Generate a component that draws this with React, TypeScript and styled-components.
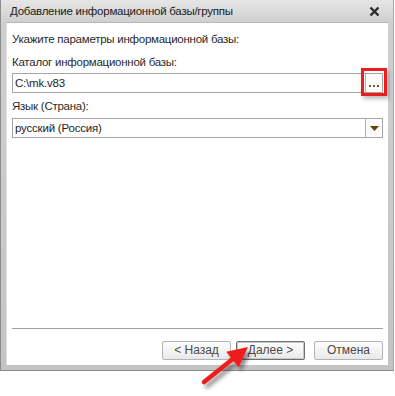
import React from "react";
import styled, { createGlobalStyle } from "styled-components";

const Global = createGlobalStyle`
  html, body { margin: 0; padding: 0; background: #ffffff; }
  body { width: 395px; height: 396px; overflow: hidden; position: relative; font-family: "Liberation Sans", Arial, sans-serif; }
`;

const Page = styled.div`
  position: relative;
  width: 395px;
  height: 396px;
`;

const Window = styled.div`
  width: 394px;
  height: 371px;
  box-sizing: border-box;
  display: flex;
  flex-direction: column;
  background: linear-gradient(to bottom, #e6e6e6 0px, #cfcfcf 22px, #c4c4c4 100%);
  border: 1px solid #8c8c8c;
  border-top: none;
  border-right-color: #a8a8a8;
  padding: 0 5px 5px 5px;
`;

const TitleBar = styled.div`
  height: 22px;
  flex: none;
  display: flex;
  align-items: center;
  justify-content: space-between;
  padding: 0 8px 0 4px;
`;

const Title = styled.span`
  font-size: 11.5px;
  color: #202020;
  letter-spacing: -0.25px;
`;

const Close = styled.svg`
  width: 11px;
  height: 11px;
`;

const Body = styled.div`
  flex: 1;
  background: #ffffff;
  border-top: 1px solid #b8b8b8;
  display: flex;
  flex-direction: column;
  padding: 9px 5px 0 6px;
  box-shadow: inset 1px 0 0 #e0e0e0;
`;

const Label = styled.div<{ $mt?: number }>`
  font-size: 11.5px;
  letter-spacing: -0.25px;
  line-height: 15px;
  color: #2a2a2a;
  margin-top: ${(p) => p.$mt ?? 0}px;
`;

const Field = styled.div<{ $mt?: number }>`
  height: 20px;
  box-sizing: border-box;
  border: 1px solid #a5a5a5;
  display: flex;
  align-items: stretch;
  margin-top: ${(p) => p.$mt ?? 0}px;
`;

const FieldText = styled.div`
  flex: 1;
  font-size: 11.5px;
  letter-spacing: -0.2px;
  line-height: 18px;
  padding-left: 2px;
  color: #1e1e1e;
`;

const SideButton = styled.div`
  width: 16px;
  flex: none;
  border-left: 1px solid #b0b0b0;
  background: #fbfbfb;
  position: relative;
  display: flex;
  align-items: center;
  justify-content: center;
`;

const Highlight = styled.div`
  position: absolute;
  left: -5px;
  top: -6px;
  width: 20px;
  height: 22px;
  border: 3px solid #ee1c1c;
  box-shadow: 2px 3px 4px rgba(0, 0, 0, 0.25);
`;

const Dots = styled.svg`
  width: 11px;
  height: 3px;
  margin-top: 6px;
`;

const Spacer = styled.div`
  flex: 1;
`;

const Separator = styled.div`
  height: 1px;
  background: #a0a0a0;
  margin: 0 0 12px 0;
`;

const ButtonRow = styled.div`
  display: flex;
  justify-content: flex-end;
  padding-bottom: 5px;
`;

const Button = styled.div<{ $default?: boolean; $ml?: number }>`
  width: 69px;
  height: 19px;
  box-sizing: border-box;
  margin-left: ${(p) => p.$ml ?? 0}px;
  border: 1px solid ${(p) => (p.$default ? "#6e6e6e" : "#b4b4b4")};
  box-shadow: ${(p) => (p.$default ? "inset 0 0 0 1px #c8c8c8" : "none")};
  border-radius: 2px;
  background: linear-gradient(to bottom, #fdfdfd 0%, #f2f2f2 60%, #e8e8e8 100%);
  font-size: 12px;
  line-height: 17px;
  text-align: center;
  color: #4a4a4a;
`;

export default function App() {
  return (
    <>
      <Global />
      <Page>
        <Window>
          <TitleBar>
            <Title>Добавление информационной базы/группы</Title>
            <Close viewBox="0 0 11 11">
              <path d="M1.5 1.5 L9.5 9.5 M9.5 1.5 L1.5 9.5" stroke="#2a2a2a" strokeWidth="2.4" />
            </Close>
          </TitleBar>
          <Body>
            <Label>Укажите параметры информационной базы:</Label>
            <Label $mt={8}>Каталог информационной базы:</Label>
            <Field $mt={3}>
              <FieldText>C:\mk.v83</FieldText>
              <SideButton>
                <Dots viewBox="0 0 11 3">
                  <rect x="0" y="0" width="2" height="2" fill="#7a5c10" />
                  <rect x="4" y="0" width="2" height="2" fill="#7a5c10" />
                  <rect x="8" y="0" width="2" height="2" fill="#7a5c10" />
                </Dots>
                <Highlight />
              </SideButton>
            </Field>
            <Label $mt={6}>Язык (Страна):</Label>
            <Field $mt={4}>
              <FieldText>русский (Россия)</FieldText>
              <SideButton>
                <svg width="9" height="5" viewBox="0 0 9 5">
                  <path d="M0 0 H9 L4.5 5 Z" fill="#5a4210" />
                </svg>
              </SideButton>
            </Field>
            <Spacer />
            <Separator />
            <ButtonRow>
              <Button>&lt; Назад</Button>
              <Button $default $ml={5}>Далее &gt;</Button>
              <Button $ml={9}>Отмена</Button>
            </ButtonRow>
          </Body>
        </Window>
        <svg
          width="395"
          height="396"
          viewBox="0 0 395 396"
          style={{ position: "absolute", left: 0, top: 0, pointerEvents: "none" }}
        >
          <defs>
            <filter id="sh" x="-50%" y="-50%" width="200%" height="200%">
              <feGaussianBlur in="SourceAlpha" stdDeviation="2" />
              <feOffset dx="3" dy="4" result="b" />
              <feComponentTransfer>
                <feFuncA type="linear" slope="0.45" />
              </feComponentTransfer>
              <feMerge>
                <feMergeNode />
                <feMergeNode in="SourceGraphic" />
              </feMerge>
            </filter>
          </defs>
          <g filter="url(#sh)">
            <line x1="204" y1="382" x2="234" y2="358" stroke="#ee1c1c" strokeWidth="4.5" strokeLinecap="round" />
            <path d="M248 347 L238.7 367.3 L226.2 351.7 Z" fill="#ee1c1c" />
          </g>
        </svg>
      </Page>
    </>
  );
}
